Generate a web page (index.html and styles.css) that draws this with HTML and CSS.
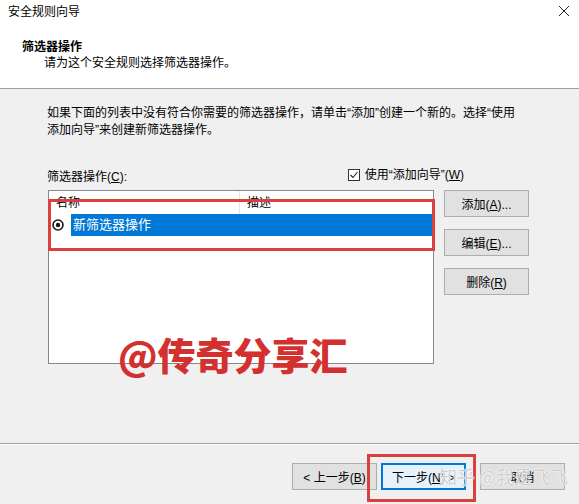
FILE: index.html
```html
<!DOCTYPE html>
<html lang="zh-CN">
<head>
<meta charset="utf-8">
<title>安全规则向导</title>
<link rel="stylesheet" href="styles.css">
</head>
<body>
<div class="dialog">
  <header class="header">
    <div class="titlebar">
      <span class="title">安全规则向导</span>
      <svg class="close" width="12" height="12" viewBox="0 0 12 12"><path d="M1 1 L11 11 M11 1 L1 11" stroke="#222" stroke-width="1" fill="none"/></svg>
    </div>
    <div class="heading">筛选器操作</div>
    <div class="subheading">请为这个安全规则选择筛选器操作。</div>
  </header>

  <main class="content">
    <p class="desc">如果下面的列表中没有符合你需要的筛选器操作，请单击“添加”创建一个新的。选择“使用<br>添加向导”来创建新筛选器操作。</p>

    <div class="labelrow">
      <span class="label">筛选器操作(<u>C</u>):</span>
      <span class="check">
        <span class="box"><svg width="10" height="10" viewBox="0 0 10 10"><path d="M1.5 5 L4 7.5 L8.5 2" stroke="#222" stroke-width="1.1" fill="none"/></svg></span>
        <span>使用“添加向导”(<u>W</u>)</span>
      </span>
    </div>

    <div class="mainrow">
      <div class="list">
        <div class="listhead">
          <span class="col1">名称</span>
          <span class="col2">描述</span>
        </div>
        <div class="item">
          <svg class="radio" width="12" height="12" viewBox="0 0 12 12"><circle cx="6" cy="6" r="5" stroke="#1a1a1a" stroke-width="1.6" fill="#fff"/><circle cx="6" cy="6" r="2.2" fill="#1a1a1a"/></svg>
          <span class="itemtext">新筛选器操作</span>
        </div>
        <div class="mark mark-list"></div>
      </div>
      <div class="sidebtns">
        <button class="btn">添加(<u>A</u>)...</button>
        <button class="btn">编辑(<u>E</u>)...</button>
        <button class="btn">删除(<u>R</u>)</button>
      </div>
    </div>
    <div class="watermark">@传奇分享汇</div>
  </main>

  <footer class="footer">
    <div class="navbtns">
      <button class="btn">&lt; 上一步(<u>B</u>)</button>
      <button class="btn btn-default">下一步(<u>N</u>) &gt;</button>
      <div class="mark mark-next"></div>
    </div>
    <button class="btn">取消</button>
    <div class="zhihu">知乎 @我是飞飞</div>
  </footer>
</div>
</body>
</html>
```

FILE: styles.css
```css
* { box-sizing: border-box; }
html, body { margin: 0; padding: 0; }
body {
  width: 579px;
  height: 504px;
  overflow: hidden;
  background: #f0f0f0;
  font-family: "Liberation Sans", "Noto Sans CJK SC", sans-serif;
  font-size: 12px;
  color: #000;
}
.dialog {
  position: relative;
  height: 504px;
  display: flex;
  flex-direction: column;
}
.header {
  background: #fff;
  height: 89px;
  border-bottom: 1px solid #a0a0a0;
}
.titlebar {
  height: 24px;
  display: flex;
  align-items: center;
  justify-content: space-between;
  padding: 0 9px 0 8px;
}
.title { line-height: 24px; }
.close { display: block; margin-top: -2px; }
.heading {
  margin-top: 15px;
  padding-left: 22px;
  font-weight: bold;
  line-height: 16px;
}
.subheading {
  padding-left: 44px;
  line-height: 17px;
}
.content {
  position: relative;
  flex: 1;
  padding-left: 47px;
  border-bottom: 1px solid #a0a0a0;
}
.desc {
  margin: 16px 0 0;
  line-height: 17px;
}
.labelrow {
  margin-top: 28px;
  width: 417px;
  display: flex;
  justify-content: space-between;
  align-items: flex-end;
  line-height: 16px;
}
.check {
  display: flex;
  align-items: center;
  gap: 5px;
  margin-bottom: 2px;
}
.box {
  width: 12px;
  height: 12px;
  border: 1px solid #333;
  background: #fff;
  display: flex;
  align-items: center;
  justify-content: center;
}
.box svg { display: block; }
.mainrow {
  margin-top: 5px;
  display: flex;
  gap: 10px;
}
.list {
  position: relative;
  margin-left: 1px;
  width: 386px;
  height: 174px;
  background: #fff;
  border: 1px solid #828790;
}
.listhead {
  height: 23px;
  display: flex;
  line-height: 25px;
}
.col1 {
  width: 191px;
  padding-left: 7px;
  border-right: 1px solid #e5e5e5;
}
.col2 { padding-left: 7px; }
.item {
  display: flex;
  align-items: center;
  height: 22px;
  padding-left: 3px;
}
.radio { display: block; margin-right: 7px; }
.itemtext {
  flex: 0 0 361px;
  height: 22px;
  line-height: 22px;
  padding-left: 2px;
  background: #0078d7;
  color: #fff;
  font-size: 13px;
}
.mark {
  position: absolute;
  border: 3px solid #d9403e;
  pointer-events: none;
}
.mark-list {
  left: -1px;
  top: 8px;
  width: 387px;
  height: 52px;
}
.sidebtns {
  display: flex;
  flex-direction: column;
  gap: 12px;
}
.btn {
  width: 85px;
  height: 27px;
  padding: 0;
  background: #e1e1e1;
  border: 1px solid #adadad;
  font-family: inherit;
  font-size: 12px;
  color: #000;
}
.btn-default {
  border: 2px solid #0078d7;
  background: #e5f1fb;
}
.watermark {
  position: absolute;
  left: 118px;
  top: 243px;
  font-family: "Noto Sans CJK SC", sans-serif;
  font-size: 38px;
  font-weight: 900;
  line-height: 44px;
  color: #d3302f;
}
.footer {
  position: relative;
  height: 60px;
  border-top: 1px solid #fff;
  display: flex;
  justify-content: flex-end;
  align-items: flex-start;
  padding: 18px 14px 0 0;
  gap: 14px;
}
.navbtns {
  position: relative;
  display: flex;
  gap: 4px;
}
.mark-next {
  left: 75px;
  top: -9px;
  width: 109px;
  height: 48px;
}
.zhihu {
  position: absolute;
  right: 11px;
  top: 19px;
  font-family: "Noto Sans CJK SC", sans-serif;
  font-size: 18px;
  line-height: 24px;
  color: rgba(195, 195, 195, 0.8);
  text-shadow: 0 0 1px #fff, 0 0 2px #fff;
  pointer-events: none;
}
```
